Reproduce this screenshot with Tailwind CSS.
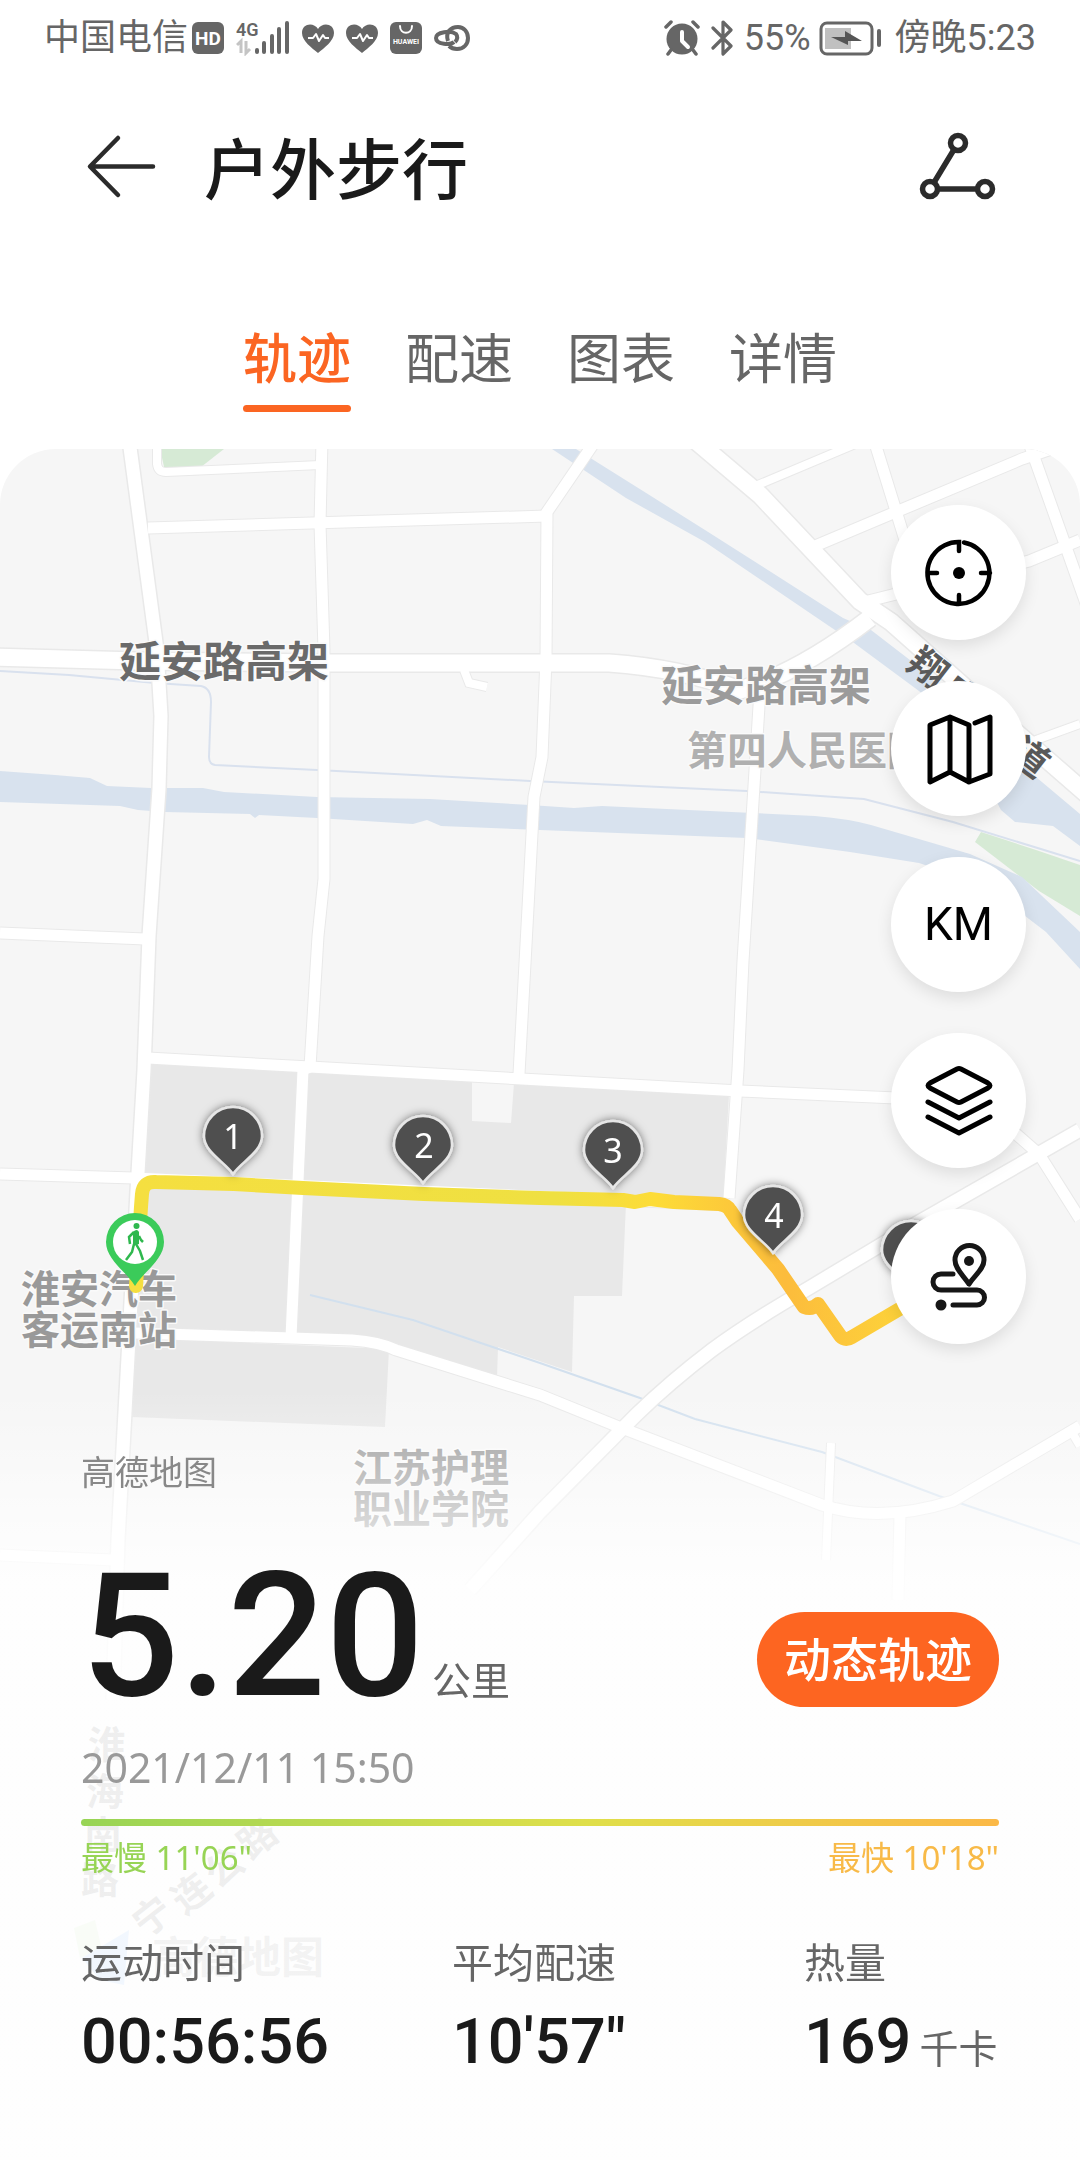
<!DOCTYPE html>
<html lang="zh-CN">
<head>
    <meta charset="UTF-8">
    <meta name="viewport" content="width=device-width, initial-scale=1.0">
    <title>户外步行</title>
    <script src="https://cdn.jsdelivr.net/npm/@tailwindcss/browser@4"></script>
</head>
<body class="min-h-screen flex flex-col bg-white text-[#1a1a1a] font-['Noto_Sans','Noto_Sans_CJK_SC',sans-serif]">

    <!-- Status bar -->
    <div class="flex items-center justify-between px-11 pt-[2px] h-[74px] text-[#666] text-[36px] leading-none font-['Roboto','Noto_Sans_CJK_SC',sans-serif]">
        <div class="flex items-center gap-3">
            <div class="flex items-center gap-1">
                <span>中国电信</span>
                <svg class="w-8 h-8" viewBox="0 0 32 32">
                    <rect x="0" y="0" width="32" height="32" rx="6" fill="#666"/>
                    <text x="16" y="23" text-anchor="middle" font-size="19" font-weight="700" fill="#fff">HD</text>
                </svg>
            </div>
            <svg class="w-[54px] h-9" viewBox="0 0 54 36" fill="#666">
                <text x="0" y="16" font-size="18" font-weight="600">4G</text>
                <path d="M1 25l4-4v12M10 21v12l4-4" fill="none" stroke="#c4c4c4" stroke-width="3"/>
                <g stroke="#666" stroke-width="4" stroke-linecap="round">
                    <path d="M21 30v2M28 23v9M36 16v16M43 9v23M51 3v29"/>
                </g>
            </svg>
            <svg class="w-8 h-8" viewBox="0 0 32 32">
                <path d="M16 31C10 26 0 19 0 11C0 1 12 0 16 7C20 0 32 1 32 11C32 19 22 26 16 31Z" fill="#666"/>
                <path d="M6 16h5l3-4 3 7 4-6 2 3h4" fill="none" stroke="#fff" stroke-width="2" stroke-linejoin="round"/>
            </svg>
            <svg class="w-8 h-8" viewBox="0 0 32 32">
                <path d="M16 31C10 26 0 19 0 11C0 1 12 0 16 7C20 0 32 1 32 11C32 19 22 26 16 31Z" fill="#666"/>
                <path d="M6 16h5l3-4 3 7 4-6 2 3h4" fill="none" stroke="#fff" stroke-width="2" stroke-linejoin="round"/>
            </svg>
            <svg class="w-8 h-8" viewBox="0 0 32 32">
                <rect x="0" y="0" width="32" height="32" rx="6" fill="#666"/>
                <path d="M10 4c0 9 12 9 12 0" fill="none" stroke="#fff" stroke-width="2" stroke-linecap="round"/>
                <text x="16" y="22" text-anchor="middle" font-size="7" font-weight="700" fill="#fff">HUAWEI</text>
            </svg>
            <svg class="w-9 h-7" viewBox="0 0 36 28" fill="none" stroke="#666" stroke-width="4">
                <path d="M20 18C17 21 2 21 2 14C2 8 17 6 22 10Q25 14 21 18"/>
                <path d="M14 17C11 8 17 3 24 3C30 3 34 8 34 14S30 25 23 25C19 25 17 24 15 22"/>
            </svg>
        </div>
        <div class="flex items-center gap-2">
            <svg class="w-9 h-9" viewBox="0 0 36 36">
                <circle cx="18" cy="19" r="15.500" fill="#666"/>
                <path d="M2 7l5-5M34 7l-5-5M7 30l-3 4M29 30l3 4" stroke="#666" stroke-width="3.500" stroke-linecap="round"/>
                <path d="M18 12v9l6 6" fill="none" stroke="#fff" stroke-width="4" stroke-linecap="round" stroke-linejoin="round"/>
            </svg>
            <svg class="w-7 h-9" viewBox="0 0 28 36" fill="none" stroke="#666" stroke-width="3.200" stroke-linecap="round" stroke-linejoin="round">
                <path d="M5 8l18 18-8 8V2l8 8L5 28"/>
            </svg>
            <span>55%</span>
            <svg class="w-16 h-9" viewBox="0 0 64 36">
                <rect x="2" y="3" width="51" height="31" rx="6" fill="none" stroke="#666" stroke-width="3"/>
                <rect x="6" y="8" width="26" height="21" fill="#c0c0c0"/>
                <path d="M12 17l17 8v-4h14l-17-10v6z" fill="#555"/>
                <path d="M60 11v14" stroke="#666" stroke-width="4" stroke-linecap="round"/>
            </svg>
            <span class="ml-1">傍晚5:23</span>
        </div>
    </div>

    <!-- Header -->
    <header class="flex items-center h-[188px] pl-20 pr-[76px]">
        <button type="button" aria-label="返回" class="w-20 h-20">
            <svg class="w-20 h-20" viewBox="0 0 80 80" fill="none" stroke="#2b2b2b" stroke-width="4.500" stroke-linecap="round" stroke-linejoin="round">
                <path d="M38 10L10 38.500L38 67M11 38.500H73"/>
            </svg>
        </button>
        <h1 class="ml-11 text-[66px] leading-none font-medium">户外步行</h1>
        <button type="button" aria-label="分享" class="ml-auto w-[92px] h-20">
            <svg class="w-[92px] h-20" viewBox="0 0 92 80" fill="none" stroke="#2b2b2b" stroke-width="5.500">
                <circle cx="46" cy="15" r="7.500"/>
                <circle cx="18" cy="61" r="7.500"/>
                <circle cx="73" cy="61" r="7.500"/>
                <path d="M42 21.500L22 54.500M25.500 61h40"/>
            </svg>
        </button>
    </header>

    <!-- Tabs -->
    <nav class="flex justify-center gap-[54px] pt-[60px] pb-[37px] text-[54px] leading-[72px] text-[#666]">
        <a href="#track" class="flex flex-col gap-[11px] text-[#fb6522] font-medium">
            轨迹
            <span class="h-[7px] rounded-full bg-[#fb6522]"></span>
        </a>
        <a href="#pace">配速</a>
        <a href="#chart">图表</a>
        <a href="#detail">详情</a>
    </nav>

    <!-- Track -->
    <main id="track" class="relative flex-1 flex flex-col overflow-hidden rounded-t-[56px] bg-[#fefefe]">

        <svg class="absolute inset-0 w-full h-full" viewBox="0 449 1080 1711" preserveAspectRatio="xMidYMin slice" aria-hidden="true">
            <defs>
                <g id="roads-lg">
                    <path d="M129 440L157 650L161 716L159 789L149 936L144 1070L138 1173L128 1357L118 1540L113 1700"/>
                    <path d="M1080 1130L919 1222L809 1288Q750 1322 712 1350Q670 1382 636 1415L540 1512L470 1590"/>
                </g>
                <g id="roads-md">
                    <path d="M322 440L320 524L324 650L324 879L318 936L310 1067L303 1070L291 1337"/>
                    <path d="M596 440L547 512L546 659L542 757L534 797L519 1074"/>
                    <path d="M760 690L752 818L743 961L738 1070L729 1198"/>
                    <path d="M148 528L547 516"/>
                    <path d="M0 933L145 939"/>
                    <path d="M148 1058L310 1067L540 1080L740 1091L940 1100L1000 1120L1039 1154L1080 1219"/>
                    <path d="M0 1174L134 1178L730 1205"/>
                    <path d="M134 1333L291 1338L352 1340Q380 1342 396 1350L540 1395L619 1427L822 1505Q880 1524 953 1501L1080 1426"/>
                    <path d="M874 440L905 540M1028 440L1088 609"/>
                    <path d="M815 546L891 514L1022 459L1060 446"/>
                    <path d="M860 603L1029 561L1080 540"/>
                    <path d="M0 1555L113 1560"/>
                    <path d="M900 1515L898 1600"/>
                </g>
                <g id="roads-sm">
                    <path d="M157 440V464Q158 472 166 472L320 465"/>
                    <path d="M753 487L860 442"/>
                    <path d="M1000 752L1036 740L1080 724"/>
                    <path d="M831 1443L826 1560"/>
                    <path d="M1070 1429L1080 1446"/>
                    <path d="M464 670L469 683L487 687"/>
                </g>
                <g id="highway">
                    <path d="M-5 657L138 661L330 663L609 663Q680 668 740 690Q800 672 870 618"/>
                    <path d="M695 440L760 495L860 601L891 622L988 708L1090 797"/>
                </g>
                <linearGradient id="pace" gradientUnits="userSpaceOnUse" x1="136" y1="0" x2="900" y2="0">
                    <stop offset="0" stop-color="#f5df40"/>
                    <stop offset=".55" stop-color="#efe041"/>
                    <stop offset=".68" stop-color="#fddc37"/>
                    <stop offset=".78" stop-color="#fcc83a"/>
                    <stop offset=".85" stop-color="#fcbc3c"/>
                    <stop offset="1" stop-color="#fdd23a"/>
                </linearGradient>
                <linearGradient id="fade" gradientUnits="userSpaceOnUse" x1="0" y1="1390" x2="0" y2="1580">
                    <stop offset="0" stop-color="#fff" stop-opacity="0"/>
                    <stop offset="1" stop-color="#fff" stop-opacity=".88"/>
                </linearGradient>
                <filter id="pin-shadow" x="-50%" y="-50%" width="200%" height="200%">
                    <feDropShadow dx="0" dy="0" stdDeviation="4" flood-color="#000" flood-opacity=".5"/>
                </filter>
                <path id="pin" d="M0 0C-8-12-29-22-29-38A29 29 0 0 1 29-38C29-22 8-12 0 0Z"/>
            </defs>

            <rect x="0" y="440" width="1080" height="1720" fill="#f6f6f6"/>

            <!-- parks and built-up blocks -->
            <g fill="#d6ead5">
                <path d="M160 449H224L201 467L165 471Z"/>
                <path d="M981 832L1036 850L1080 865V916L1039 891L975 842Z"/>
            </g>
            <g fill="#e8e8e8">
                <path d="M151 1062L729 1094L723 1203L626 1203L622 1296H574L572 1372L498 1347L497 1378L396 1350L291 1338L134 1333Z"/>
                <path d="M134 1338L389 1349L385 1427L132 1417Z"/>
            </g>
            <path d="M472 1082L514 1083L511 1123L472 1121Z" fill="#f6f6f6"/>

            <!-- water -->
            <g fill="#d8e2ee">
                <path d="M0 771L55 775L90 778L107 786L151 788L203 788L224 792L317 797L430 799L530 805L574 808L602 806L815 816Q850 819 871 825L970 854L1022 877L1080 932V969L1046 932L985 885L919 863L850 852L747 838L540 830L441 826L427 820L413 824L317 818L259 815L255 818L250 814L165 812L138 810L120 806L0 802Z"/>
                <path d="M552 449H576L643 491L705 530L843 618L871 630L919 667L1036 777L1080 814V846L1053 826L1015 822L1001 810L953 720L919 691L850 640L829 626L705 542L626 498Z"/>
            </g>
            <g fill="none" stroke-width="2">
                <path stroke="#d9e1ee" d="M0 671L69 675L155 683L201 686Q211 688 211 702L209 757Q209 764 215 765L317 770L530 781L747 791L864 799L953 822L1080 861"/>
                <path stroke="#d2e0ee" d="M310 1295L413 1320L540 1363L640 1398L695 1419L822 1452L939 1496L1080 1544"/>
            </g>

            <!-- roads: casing first, then surface -->
            <g fill="none" stroke="#e9e9e9">
                <use href="#roads-sm" stroke-width="10"/>
                <use href="#roads-md" stroke-width="13"/>
                <use href="#roads-lg" stroke-width="16"/>
                <use href="#highway" stroke-width="20"/>
            </g>
            <g fill="none" stroke="#fff">
                <use href="#roads-sm" stroke-width="8"/>
                <use href="#roads-md" stroke-width="11"/>
                <use href="#roads-lg" stroke-width="13"/>
                <use href="#highway" stroke-width="17"/>
            </g>

            <!-- place names -->
            <g font-weight="700" stroke="#fafafa" stroke-width="3" stroke-linejoin="round" paint-order="stroke">
                <text x="119" y="677" font-size="42" fill="#6a6a6a">延安路高架</text>
                <text x="661" y="701" font-size="42" fill="#9b9b9b">延安路高架</text>
                <text x="687" y="765" font-size="40" fill="#b0b0b0">第四人民医院</text>
                <g font-size="38" fill="#5a5a5a" stroke="none" text-anchor="middle">
                    <text transform="translate(928 668) rotate(38)" y="14">翔</text>
                    <text transform="translate(962 697) rotate(38)" y="14">宇</text>
                    <text transform="translate(996 726) rotate(38)" y="14">大</text>
                    <text transform="translate(1030 757) rotate(38)" y="14">道</text>
                </g>
                <g font-size="39" fill="#999">
                    <text x="21" y="1303">淮安汽车</text>
                    <text x="21" y="1344">客运南站</text>
                    <text x="353" y="1482">江苏护理</text>
                    <text x="353" y="1523">职业学院</text>
                </g>
                <g font-size="38" fill="#777" text-anchor="middle">
                    <text x="107" y="1758">淮</text>
                    <text x="105" y="1805">海</text>
                    <text x="103" y="1848">南</text>
                    <text x="100" y="1893">路</text>
                    <text transform="translate(152 1916) rotate(-38)" y="14">宁</text>
                    <text transform="translate(191 1893) rotate(-38)" y="14">连</text>
                    <text transform="translate(224 1867) rotate(-38)" y="14">公</text>
                    <text transform="translate(257 1838) rotate(-38)" y="14">路</text>
                </g>
                <text x="152" y="1973" font-size="43" fill="#999">高德地图</text>
            </g>
            <path d="M74 1928L95 1920L102 1950L80 1958Z" fill="#cdeac0"/>
            <path d="M82 1958L129 1930L124 1985L100 1980Z" fill="#8fc0f5"/>

            <rect x="0" y="1390" width="1080" height="770" fill="url(#fade)"/>

            <!-- walked route -->
            <path d="M136 1286L141 1207L142 1194Q143 1181 156 1182L234 1184L303 1188L424 1194L540 1198L623 1200L635 1202L650 1199L674 1202L719 1204Q727 1205 730 1210L738 1222L778 1269L804 1307Q812 1310 818 1304L839 1334Q844 1342 852 1337L920 1297" fill="none" stroke="url(#pace)" stroke-width="14" stroke-linecap="round" stroke-linejoin="round"/>

            <!-- kilometre pins -->
            <g fill="#505050" stroke="#e6e6e6" stroke-width="2.500" filter="url(#pin-shadow)">
                <use href="#pin" x="233" y="1174"/>
                <use href="#pin" x="423" y="1183"/>
                <use href="#pin" x="613" y="1188"/>
                <use href="#pin" x="773" y="1253"/>
                <use href="#pin" x="911" y="1288"/>
            </g>
            <g fill="#fff" font-size="34" text-anchor="middle">
                <text x="233" y="1149">1</text>
                <text x="424" y="1158">2</text>
                <text x="613" y="1163">3</text>
                <text x="774" y="1228">4</text>
            </g>

            <!-- start pin -->
            <g transform="translate(135 1286)">
                <path d="M0 0C-8-14-29-26-29-44A29 29 0 0 1 29-44C29-26 8-14 0 0Z" fill="#3bcb5a"/>
                <circle cx="0" cy="-44" r="22" fill="#fff"/>
                <circle cx="1.500" cy="-60" r="3" fill="#2fb84e"/>
                <path d="M-2-54Q2-58 4-54L4-42L-2-40Z" fill="#2fb84e"/>
                <path d="M-1-54L-6-49L-5-42M4-50L6-46L8-44M-1-42L-3-34L-9-26M1-42L5-35L8-26" fill="none" stroke="#2fb84e" stroke-width="2.500"/>
            </g>
        </svg>

        <!-- Map controls -->
        <div class="relative flex flex-col items-end gap-[41px] pt-14 pr-[54px]">
            <button type="button" aria-label="定位" class="grid place-items-center w-[135px] h-[135px] rounded-full bg-white shadow-[0_6px_16px_rgba(0,0,0,0.1)]">
                <svg class="w-[72px] h-[72px]" viewBox="0 0 72 72" fill="none" stroke="#000" stroke-width="4.500" stroke-linecap="round">
                    <path d="M41 5.500A31 31 0 1 1 36 5V14M36 58v9M5 36h9M58 36h9"/>
                    <circle cx="36" cy="36" r="6" fill="#000" stroke="none"/>
                </svg>
            </button>
            <button type="button" aria-label="地图类型" class="grid place-items-center w-[135px] h-[135px] rounded-full bg-white shadow-[0_6px_16px_rgba(0,0,0,0.1)]">
                <svg class="w-[72px] h-[72px]" viewBox="0 0 72 72" fill="none" stroke="#000" stroke-width="5" stroke-linecap="round" stroke-linejoin="round">
                    <path d="M7 12L27 4L46 12V69L27 59L7 69ZM27 4V59M52 10L67 4V61L46 69"/>
                </svg>
            </button>
            <button type="button" class="grid place-items-center w-[135px] h-[135px] rounded-full bg-white text-black text-[46px] font-[Roboto] shadow-[0_6px_16px_rgba(0,0,0,0.1)]">KM</button>
            <button type="button" aria-label="图层" class="grid place-items-center w-[135px] h-[135px] rounded-full bg-white shadow-[0_6px_16px_rgba(0,0,0,0.1)]">
                <svg class="w-[72px] h-[72px]" viewBox="0 0 72 72" fill="none" stroke="#000" stroke-width="5" stroke-linecap="round" stroke-linejoin="round">
                    <path d="M34 4Q36 3 38 4L65 18Q69 20.500 65 23L38 37Q36 38 34 37L7 23Q3 20.500 7 18Z"/>
                    <path d="M5 37L36 53L67 37M5 52L36 68L67 52"/>
                </svg>
            </button>
            <button type="button" aria-label="轨迹设置" class="grid place-items-center w-[135px] h-[135px] rounded-full bg-white shadow-[0_6px_16px_rgba(0,0,0,0.1)]">
                <svg class="w-[72px] h-[72px]" viewBox="0 0 72 72" fill="none" stroke="#161616" stroke-width="5" stroke-linecap="round" stroke-linejoin="round">
                    <path d="M46 43C40 34 32 28 32 19A14 14 0 0 1 61 19C61 28 52 34 46 43Z"/>
                    <path d="M30 33H18A8 8 0 0 0 18 49H54A7.500 7.500 0 0 1 54 64H30"/>
                    <circle cx="46" cy="20" r="5" fill="#161616" stroke="none"/>
                    <circle cx="18" cy="64" r="5.500" fill="#161616" stroke="none"/>
                </svg>
            </button>
        </div>

        <!-- Summary -->
        <section class="relative px-[81px] pb-12">
            <p class="mt-[104px] text-[34px] leading-[48px] text-[#888]">高德地图</p>

            <div class="mt-[54px] flex items-end justify-between">
                <p class="flex items-baseline gap-2 leading-none">
                    <span class="text-[173px] font-medium font-[Roboto]">5.20</span>
                    <span class="text-[39px] text-[#666]">公里</span>
                </p>
                <button type="button" class="mb-4 h-[95px] w-[242px] rounded-full bg-[#fd6521] text-white text-[47px] leading-none font-medium">动态轨迹</button>
            </div>

            <p class="mt-5 text-[41px] leading-[48px] text-[#999]">2021/12/11 15:50</p>

            <div class="mt-7 h-[7px] rounded-full bg-linear-to-r from-[#97d455] via-[#dfdf4a] via-55% to-[#fbb847]"></div>
            <div class="mt-3 flex justify-between text-[33px] leading-10">
                <span class="text-[#97d455]">最慢 11'06"</span>
                <span class="text-[#f8ba48]">最快 10'18"</span>
            </div>

            <dl class="mt-14 grid grid-cols-[371fr_352fr_195fr]">
                <div>
                    <dt class="text-[41px] leading-[56px] text-[#666]">运动时间</dt>
                    <dd class="mt-3 text-[63px] leading-[80px] font-medium font-['Roboto','Noto_Sans_CJK_SC',sans-serif]">00:56:56</dd>
                </div>
                <div>
                    <dt class="text-[41px] leading-[56px] text-[#666]">平均配速</dt>
                    <dd class="mt-3 text-[63px] leading-[80px] font-medium font-['Roboto','Noto_Sans_CJK_SC',sans-serif]">10'57"</dd>
                </div>
                <div>
                    <dt class="text-[41px] leading-[56px] text-[#666]">热量</dt>
                    <dd class="mt-3 flex items-baseline gap-2 text-[63px] leading-[80px] font-medium font-['Roboto','Noto_Sans_CJK_SC',sans-serif]">169<span class="text-[39px] font-normal text-[#666] whitespace-nowrap">千卡</span></dd>
                </div>
            </dl>
        </section>
    </main>
</body>
</html>
